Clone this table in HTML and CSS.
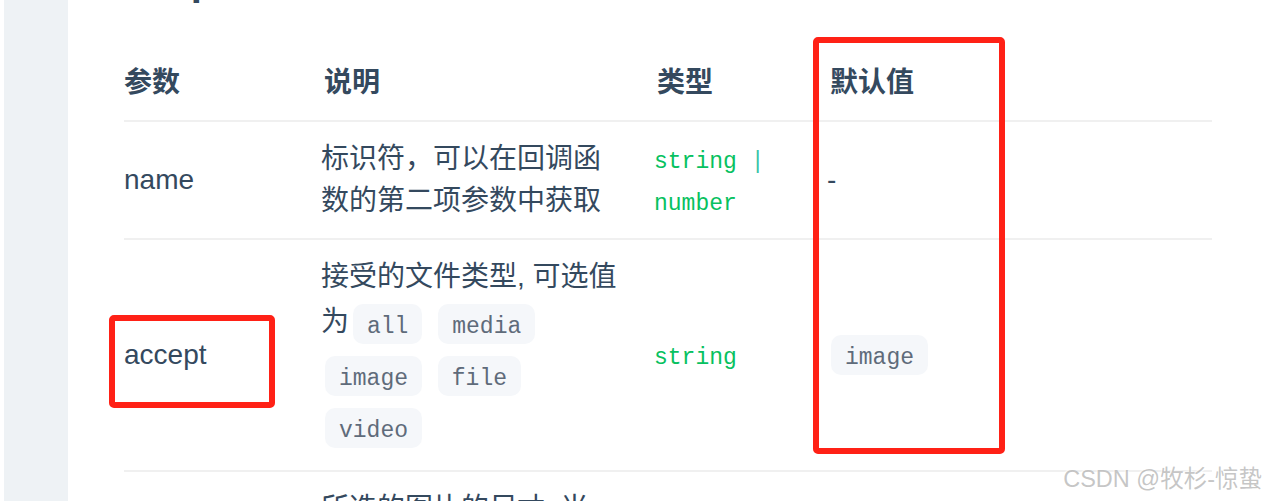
FILE: index.html
```html
<!DOCTYPE html>
<html lang="zh-CN">
<head>
<meta charset="utf-8">
<title>Uploader Props</title>
<link rel="stylesheet" href="styles.css">
</head>
<body>
<div class="page">
  <aside class="side"></aside>
  <main class="content">
    <h3 class="title">Props</h3>
    <table class="props">
      <colgroup>
        <col class="c-name"><col class="c-desc"><col class="c-type"><col class="c-default">
      </colgroup>
      <thead>
        <tr><th>参数</th><th>说明</th><th>类型</th><th>默认值</th></tr>
      </thead>
      <tbody>
        <tr>
          <td>name</td>
          <td>标识符，可以在回调函数的第二项参数中获取</td>
          <td class="type">string <span class="sep">|</span> number</td>
          <td>-</td>
        </tr>
        <tr>
          <td>accept</td>
          <td>接受的文件类型, 可选值为<code class="tag">all</code> <code class="tag">media</code> <code class="tag">image</code> <code class="tag">file</code> <code class="tag">video</code></td>
          <td class="type">string</td>
          <td><code class="tag">image</code></td>
        </tr>
        <tr>
          <td>sizeType</td>
          <td>所选的图片的尺寸, 当accept为image类型时设置所选图片的尺寸可选值为<code class="tag">original</code> <code class="tag">compressed</code></td>
          <td class="type">string[]</td>
          <td><code class="tag">['original','compressed']</code></td>
        </tr>
      </tbody>
    </table>
  </main>
</div>
<div class="mark mark-accept"></div>
<div class="mark mark-default"></div>
<div class="watermark">CSDN @牧杉-惊蛰</div>
</body>
</html>
```
FILE: styles.css
```css
html, body {
  margin: 0;
  padding: 0;
  background: #ffffff;
  overflow: hidden;
}

body {
  font-family: "Liberation Sans", "Noto Sans CJK SC", sans-serif;
  color: #34495e;
  height: 501px;
  position: relative;
}

.page {
  display: flex;
  height: 501px;
  padding-left: 4px;
}

.side {
  width: 64px;
  flex: none;
  background: #eef2f5;
}

.content {
  flex: 1;
  padding-left: 56px;
  padding-right: 53px;
  min-width: 0;
}

.title {
  margin: -39px 0 45px;
  font-size: 40px;
  line-height: 40px;
  font-weight: bold;
  color: #34495e;
}

.props {
  width: 1088px;
  table-layout: fixed;
  border-collapse: collapse;
  font-size: 28px;
  line-height: 42px;
}

.c-name { width: 177px; }
.c-desc { width: 333px; }
.c-type { width: 173px; }
.c-default { width: 405px; }

.props th,
.props td {
  padding: 16px 12px 16px 20px;
  text-align: left;
  vertical-align: middle;
  border-bottom: 2px solid #f0f0f0;
}

.props th {
  padding-left: 23px;
  font-weight: bold;
  color: #34495e;
}

.props th:first-child,
.props td:first-child {
  padding-left: 0;
}

.props td.type {
  padding-top: 19px;
  padding-bottom: 13px;
  font-family: "Liberation Mono", monospace;
  font-size: 23px;
  line-height: 42px;
  color: #07c160;
}

.sep {
  color: #3cc4a8;
}

.tag {
  display: inline-block;
  vertical-align: middle;
  height: 37px;
  line-height: 40px;
  margin: 6px 4px;
  padding: 3px 14px 0;
  font-family: "Liberation Mono", monospace;
  font-size: 23px;
  color: #5f6b7a;
  background: #f5f7fa;
  border-radius: 10px;
}

.mark {
  position: absolute;
  box-sizing: border-box;
  border: 6px solid #ff2116;
  border-radius: 5px;
}

.mark-accept {
  left: 109px;
  top: 315px;
  width: 166px;
  height: 93px;
}

.mark-default {
  left: 813px;
  top: 37px;
  width: 192px;
  height: 417px;
}

.watermark {
  position: absolute;
  right: 3px;
  top: 464px;
  font-family: "Liberation Sans", "Noto Sans CJK SC", sans-serif;
  font-size: 23.5px;
  line-height: 30px;
  color: rgba(160, 160, 160, 0.6);
  text-shadow: 1px 1px 1px rgba(255, 255, 255, 0.9), -1px -1px 1px rgba(255, 255, 255, 0.6);
  white-space: nowrap;
}
```
